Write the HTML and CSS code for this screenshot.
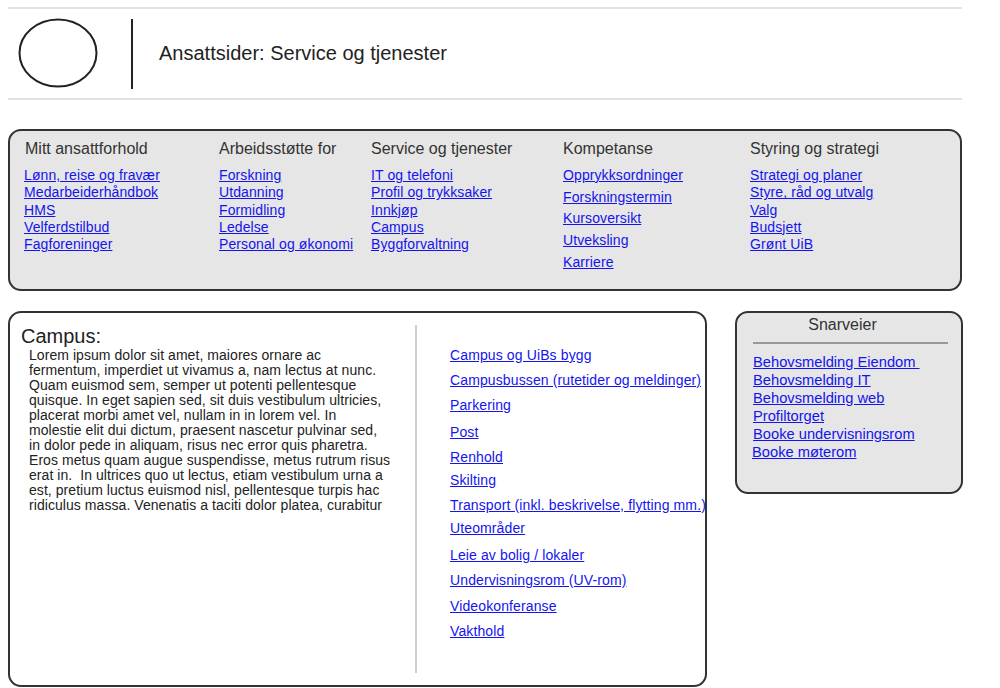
FILE: index.html
```html
<!DOCTYPE html>
<html lang="no">
<head>
<meta charset="utf-8">
<title>Ansattsider: Service og tjenester</title>
<link rel="stylesheet" href="styles.css">
</head>
<body>
<div class="page">
  <header class="header">
    <svg class="logo" width="80" height="70" viewBox="0 0 80 70"><ellipse cx="40" cy="35" rx="38.5" ry="33.5" fill="none" stroke="#222" stroke-width="2"/></svg>
    <div class="vsep"></div>
    <h1 class="title">Ansattsider: Service og tjenester</h1>
  </header>

  <nav class="nav">
    <div class="col c1">
      <h2>Mitt ansattforhold</h2>
      <ul>
        <li><a href="#">Lønn, reise og fravær</a></li>
        <li><a href="#">Medarbeiderhåndbok</a></li>
        <li><a href="#">HMS</a></li>
        <li><a href="#">Velferdstilbud</a></li>
        <li><a href="#">Fagforeninger</a></li>
      </ul>
    </div>
    <div class="col c2">
      <h2>Arbeidsstøtte for</h2>
      <ul>
        <li><a href="#">Forskning</a></li>
        <li><a href="#">Utdanning</a></li>
        <li><a href="#">Formidling</a></li>
        <li><a href="#">Ledelse</a></li>
        <li><a href="#">Personal og økonomi</a></li>
      </ul>
    </div>
    <div class="col c3">
      <h2>Service og tjenester</h2>
      <ul>
        <li><a href="#">IT og telefoni</a></li>
        <li><a href="#">Profil og trykksaker</a></li>
        <li><a href="#">Innkjøp</a></li>
        <li><a href="#">Campus</a></li>
        <li><a href="#">Byggforvaltning</a></li>
      </ul>
    </div>
    <div class="col c4">
      <h2>Kompetanse</h2>
      <ul class="wide">
        <li><a href="#">Opprykksordninger</a></li>
        <li><a href="#">Forskningstermin</a></li>
        <li><a href="#">Kursoversikt</a></li>
        <li><a href="#">Utveksling</a></li>
        <li><a href="#">Karriere</a></li>
      </ul>
    </div>
    <div class="col c5">
      <h2>Styring og strategi</h2>
      <ul>
        <li><a href="#">Strategi og planer</a></li>
        <li><a href="#">Styre, råd og utvalg</a></li>
        <li><a href="#">Valg</a></li>
        <li><a href="#">Budsjett</a></li>
        <li><a href="#">Grønt UiB</a></li>
      </ul>
    </div>
  </nav>

  <div class="lower">
    <section class="campus">
      <div class="campus-text">
        <h2>Campus:</h2>
        <p>Lorem ipsum dolor sit amet, maiores ornare ac<br>
        fermentum, imperdiet ut vivamus a, nam lectus at nunc.<br>
        Quam euismod sem, semper ut potenti pellentesque<br>
        quisque. In eget sapien sed, sit duis vestibulum ultricies,<br>
        placerat morbi amet vel, nullam in in lorem vel. In<br>
        molestie elit dui dictum, praesent nascetur pulvinar sed,<br>
        in dolor pede in aliquam, risus nec error quis pharetra.<br>
        Eros metus quam augue suspendisse, metus rutrum risus<br>
        erat in.&nbsp; In ultrices quo ut lectus, etiam vestibulum urna a<br>
        est, pretium luctus euismod nisl, pellentesque turpis hac<br>
        ridiculus massa. Venenatis a taciti dolor platea, curabitur</p>
      </div>
      <div class="campus-divider"></div>
      <ul class="campus-links">
        <li><a href="#">Campus og UiBs bygg</a></li>
        <li><a href="#">Campusbussen (rutetider og meldinger)</a></li>
        <li><a href="#">Parkering</a></li>
        <li class="gap-lg"><a href="#">Post</a></li>
        <li><a href="#">Renhold</a></li>
        <li class="gap-sm"><a href="#">Skilting</a></li>
        <li><a href="#">Transport (inkl. beskrivelse, flytting mm.)</a></li>
        <li class="gap-sm"><a href="#">Uteområder</a></li>
        <li class="gap-lg"><a href="#">Leie av bolig / lokaler</a></li>
        <li><a href="#">Undervisningsrom (UV-rom)</a></li>
        <li class="gap-xs"><a href="#">Videokonferanse</a></li>
        <li><a href="#">Vakthold</a></li>
      </ul>
    </section>

    <aside class="shortcuts">
      <h2>Snarveier</h2>
      <div class="hrule"></div>
      <ul>
        <li><a href="#">Behovsmelding Eiendom&nbsp;</a></li>
        <li><a href="#">Behovsmelding IT</a></li>
        <li><a href="#">Behovsmelding web</a></li>
        <li><a href="#">Profiltorget</a></li>
        <li><a href="#">Booke undervisningsrom</a></li>
        <li class="flush"><a href="#">Booke møterom</a></li>
      </ul>
    </aside>
  </div>
</div>
</body>
</html>
```

FILE: styles.css
```css
* { box-sizing: border-box; }
html, body { margin: 0; padding: 0; background: #fff; }
body {
  font-family: "Liberation Sans", Arial, sans-serif;
  color: #222;
}
ul { list-style: none; margin: 0; padding: 0; }
h1, h2, p { margin: 0; font-weight: normal; }
a { color: #1414ee; text-decoration: underline; }

.page {
  width: 1000px;
  padding: 7px 37px 0 8px;
}

.header {
  display: flex;
  align-items: center;
  height: 93px;
  border-top: 2px solid #e3e3e3;
  border-bottom: 2px solid #e3e3e3;
  padding-left: 10px;
  margin-right: 1px;
}
.logo { display: block; margin-top: -1px; }
.vsep {
  width: 2px;
  height: 70px;
  background: #222;
  margin-left: 33px;
  margin-right: 26px;
}
.title {
  font-size: 20px;
  color: #222;
}

.nav {
  margin-top: 29px;
  margin-right: 1px;
  height: 162px;
  border: 2px solid #333;
  border-radius: 13px;
  background: #e6e6e6;
  display: flex;
  padding: 8px 0 0 14px;
}
.col h2 {
  font-size: 16px;
  line-height: 20px;
  color: #333;
  margin-bottom: 8px;
}
.c1 h2 { padding-left: 1px; }
.col li { font-size: 14px; line-height: 17.3px; letter-spacing: 0.1px; white-space: nowrap; }
.col ul.wide { margin-top: -2px; }
.col ul.wide li { line-height: 21.7px; }
.c1 { width: 195px; }
.c2 { width: 152px; }
.c3 { width: 192px; }
.c4 { width: 187px; }
.c5 { flex: 1; }

.lower {
  display: flex;
  align-items: flex-start;
  margin-top: 20px;
}

.campus {
  flex: none;
  width: 699px;
  height: 376px;
  border: 2px solid #333;
  border-radius: 13px;
  background: #fff;
  display: flex;
  padding: 12px 0 12px 11px;
}
.campus-text { width: 394px; flex: none; }
.campus-text h2 {
  font-size: 20px;
  line-height: 22px;
  color: #222;
  margin-bottom: 1px;
}
.campus-text p {
  font-size: 14px;
  line-height: 15px;
  color: #222;
  padding-left: 8px;
  white-space: nowrap;
  letter-spacing: 0.06px;
}
.campus-divider {
  flex: none;
  width: 2px;
  background: #cfcfcf;
  margin-right: 33px;
}
.campus-links {
  padding-top: 22px;
  display: flex;
  flex-direction: column;
  gap: 8px;
}
.campus-links li {
  font-size: 14px;
  line-height: 17px;
  letter-spacing: 0.12px;
  white-space: nowrap;
}
.campus-links li.gap-lg { margin-top: 2px; }
.campus-links li.gap-xs { margin-top: 1px; }
.campus-links li.gap-sm { margin-top: -2px; }

.shortcuts {
  flex: none;
  width: 228px;
  height: 183px;
  margin-left: 28px;
  border: 2px solid #333;
  border-radius: 13px;
  background: #e6e6e6;
  padding: 2px 13px 0 16px;
}
.shortcuts h2 {
  font-size: 16px;
  line-height: 20px;
  text-align: center;
  color: #333;
  padding-right: 16px;
}
.hrule {
  height: 2px;
  background: #9a9a9a;
  margin-top: 7px;
  margin-bottom: 9px;
}
.shortcuts li { font-size: 14.7px; line-height: 18px; white-space: nowrap; }
.shortcuts li.flush { margin-left: -1px; }
```
